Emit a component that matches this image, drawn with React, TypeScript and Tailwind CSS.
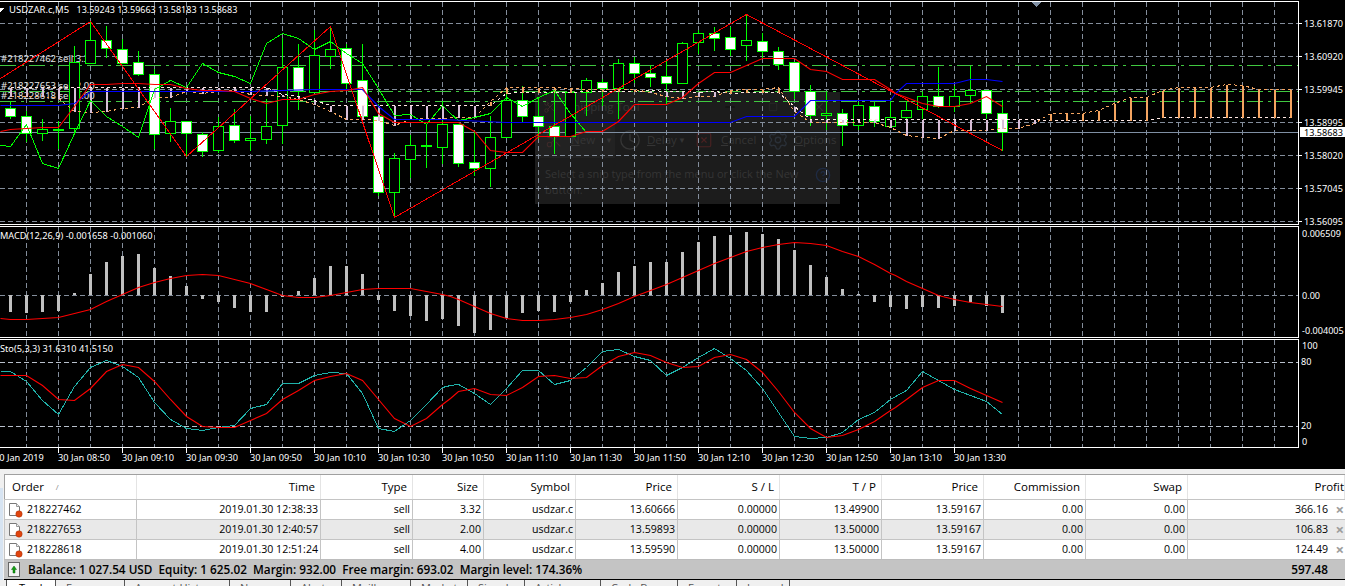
import { Scissors, Clock, SquareX, X, Settings, CircleHelp, Minus, Square } from "lucide-react";

type P = number[][];
const px = (v: number) => Math.floor(v / 3) + 0.5;
const off = (o: number, a: P): P => a.map(([x, y]) => [x + o, y]);
const pts = (a: P, base = 0) => a.map(([x, y]) => `${px(x)},${px(y) + base}`).join(" ");
const cx = (i: number) => 10.5 + 16 * i;

const candles: number[][] = [
  [300,355,325,349,1],[330,425,350,400,1],[355,422,388,400,0],[362,445,388,390,0],[135,400,187,385,0],[65,190,121,190,0],[75,172,121,145,1],[115,190,149,190,1],[152,225,187,223,1],[205,445,223,403,1],
  [322,425,364,400,0],[362,470,364,400,1],[395,470,403,454,1],[350,458,379,451,0],[325,428,376,421,1],[345,450,415,421,0],[295,430,379,418,0],[112,430,202,376,0],[130,328,202,274,1],[88,275,166,277,0],
  [78,205,148,169,0],[130,265,145,250,1],[130,355,241,349,1],[310,585,349,577,1],[457,650,475,577,0],[402,532,436,478,0],[370,503,436,439,0],[300,490,373,442,0],[370,500,373,490,1],[395,525,488,505,1],
  [345,560,412,505,0],[262,412,301,412,0],[255,365,301,349,1],[290,415,349,379,1],[265,460,379,409,1],[275,410,277,409,0],[232,345,241,277,0],[235,315,248,265,1],[175,355,190,265,0],[168,248,190,220,1],
  [193,260,220,232,1],[180,310,229,250,1],[123,250,130,250,0],[88,160,100,127,0],[78,152,100,115,1],[78,165,112,148,1],[42,182,121,136,0],[97,172,124,154,1],[138,208,154,193,1],[187,295,187,274,1],
  [252,375,275,346,1],[275,388,340,346,0],[325,435,340,376,1],[305,388,316,376,0],[305,380,319,364,1],[302,382,352,379,0],[302,380,331,352,0],[275,355,289,328,0],[200,322,289,319,1],[255,335,289,319,0],
  [196,308,271,286,0],[268,355,271,340,1],[297,450,340,397,1],
];

const cloud: [number, number, string][] = [
  [262,288,"p"],[262,290,"p"],[262,290,"p"],[262,295,"p"],[262,333,"p"],[262,337,"p"],[262,335,"p"],[262,325,"p"],[262,322,"p"],[262,293,"p"],[262,292,"p"],[262,275,"p"],[262,281,"p"],[262,275,"p"],[262,272,"p"],[262,284,"p"],[262,287,"p"],[282,290,"p"],[290,298,"p"],[302,312,"p"],
  [316,334,"p"],[316,358,"p"],[316,358,"p"],[316,362,"p"],[316,376,"p"],[316,358,"p"],[316,356,"p"],[316,355,"p"],[316,352,"p"],[316,352,"p"],[305,315,"o"],[262,280,"o"],[262,278,"o"],[262,278,"o"],[262,278,"o"],[264,278,"o"],[268,275,"o"],[268,275,"o"],[268,275,"o"],[268,275,"o"],
  [272,276,"p"],[275,290,"p"],[275,295,"p"],[277,290,"p"],[275,290,"p"],[272,280,"o"],[268,278,"o"],[268,278,"o"],[263,278,"o"],[320,335,"p"],[358,368,"p"],[358,368,"p"],[358,368,"p"],[358,368,"p"],[358,368,"p"],[358,382,"p"],[358,405,"p"],[358,413,"p"],[358,415,"p"],[358,392,"p"],
  [358,390,"p"],[358,390,"p"],[358,385,"p"],[358,385,"p"],[358,370,"p"],[340,362,"o"],[340,362,"o"],[340,362,"o"],[332,360,"o"],[310,362,"o"],[293,360,"o"],[292,360,"o"],[270,352,"o"],[262,352,"o"],[262,352,"o"],[262,352,"o"],[253,352,"o"],[256,352,"o"],[268,352,"o"],[268,352,"o"],[268,352,"o"],
];

const zig: P = [[0,235],[271,65],[559,470],[991,78],[1183,653],[2239,42],[3007,450]];
const ma: P = [
  [0,393],[31,388],[79,384],[127,382],[175,382],[223,320],[271,254],[319,252],[367,250],[415,250],[463,253],[511,253],[559,265],[607,272],[655,270],[703,275],[751,295],[799,310],[847,298],[895,298],[943,282],[991,275],[1039,270],[1087,262],[1135,340],[1183,367],[1231,367],[1279,368],[1327,367],
  ...off(1350,[[25,367],[73,395],[121,450],[169,458],[217,458],[265,409],[313,409],[361,409],[409,394],[457,394],[505,364],[553,313],[601,313],[649,313],[697,292],[745,250],[793,217],[841,217],[889,196],[937,175],[985,175],[1033,175],[1081,208],[1129,214],[1177,238],[1225,238],[1273,238],[1321,268]]),
  ...off(2685,[[0,280],[34,292],[82,310],[130,319],[178,319],[226,310],[274,289],[322,320]]),
];
const blue: P = [
  [0,316],[175,316],[223,310],[271,274],[319,274],[703,274],[751,274],[943,268],[1087,268],[1135,320],[1183,358],[1327,358],
  ...off(1350,[[169,367],[841,367],[889,349],[1033,349],[1081,301],[1321,301]]),
  ...off(2685,[[0,280],[34,250],[178,250],[226,238],[274,238],[322,244]]),
];
const greenLine: P = [
  [0,436],[31,439],[79,373],[127,490],[175,505],[223,400],[271,301],[319,349],[367,380],[415,411],[463,268],[511,241],[559,262],[607,190],[655,217],[703,229],[751,250],[799,130],[847,100],[895,115],[943,148],[991,124],[1039,160],[1087,190],[1135,265],[1183,345],[1231,342],[1279,373],[1327,316],
  ...off(1350,[[0,340],[25,362],[73,352],[121,340],[169,293],[217,318],[265,291],[313,272],[361,340],[409,397]]),
];

const macdBars = [262,265,262,258,205,148,112,94,88,130,154,184,222,232,250,262,262,216,198,160,124,123,148,226,258,274,288,283,303,325,316,280,264,258,262,232,195,174,141,123,112,111,82,51,34,30,22,27,43,75,121,156,192,208,232,247,252,247,250,243,232,243,264];
const macdSig: P = [
  [0,281],[31,284],[79,284],[127,281],[175,277],[223,265],[271,252],[319,230],[367,207],[415,187],[463,172],[511,160],[559,152],[607,149],[655,152],[703,163],[751,176],[799,193],[847,210],[895,216],[943,217],[991,210],[1039,203],[1087,193],[1135,190],[1183,190],[1231,190],[1279,198],[1327,208],
  ...off(1350,[[0,214],[25,222],[73,245],[121,265],[169,280],[217,286],[265,287],[313,283],[361,277],[409,267],[457,254],[505,235],[553,213],[601,197],[649,178],[697,156],[745,136],[793,116],[841,97],[889,78],[937,68],[985,58],[1033,52],[1081,55],[1129,61],[1177,79],[1225,95],[1273,118],[1321,145]]),
  ...off(2685,[[0,151],[34,170],[82,190],[130,210],[178,224],[226,232],[274,238],[322,244]]),
];
const stoMain: P = [
  [0,439],[31,439],[79,470],[127,525],[175,568],[223,484],[271,427],[319,406],[367,424],[415,457],[463,532],[511,583],[559,610],[607,616],[655,607],[703,600],[751,551],[799,538],[847,475],[895,475],[943,450],[991,442],[1039,445],[1087,505],[1135,610],[1183,619],[1231,586],[1279,538],[1327,486],
  ...off(1350,[[0,481],[25,478],[73,505],[121,538],[169,490],[217,436],[265,436],[313,478],[361,466],[409,427],[457,379],[505,373],[553,394],[601,406],[649,451],[697,427],[745,397],[793,370],[841,400],[889,436],[937,490],[985,562],[1033,634],[1081,640],[1129,637],[1177,622],[1225,584],[1273,562],[1321,523]]),
  ...off(2685,[[0,514],[34,495],[82,439],[130,466],[178,492],[226,511],[274,529],[322,567]]),
];
const stoSig: P = [
  [0,452],[31,451],[79,451],[127,481],[175,523],[223,526],[271,490],[319,439],[367,418],[415,427],[463,469],[511,523],[559,574],[607,604],[655,608],[703,606],[751,586],[799,565],[847,523],[895,496],[943,466],[991,454],[1039,445],[1087,466],[1135,523],[1183,580],[1231,604],[1279,580],[1327,538],
  ...off(1350,[[0,520],[25,499],[73,490],[121,508],[169,511],[217,487],[265,454],[313,451],[361,460],[409,457],[457,421],[505,393],[553,383],[601,390],[649,412],[697,427],[745,424],[793,397],[841,388],[889,403],[937,442],[985,499],[1033,562],[1081,610],[1129,636],[1177,632],[1225,613],[1273,589],[1321,556]]),
  ...off(2685,[[0,547],[34,523],[82,487],[130,466],[178,466],[226,490],[274,511],[322,533]]),
];

const vGrid = Array.from({ length: 40 }, (_, k) => 26.5 + 32 * k);
const GRID = "#838d9b";
const DOT = "5 3";

function VLines({ y1, y2 }: { y1: number; y2: number }) {
  return (
    <>
      {vGrid.map((x) => (
        <line key={x} x1={x} x2={x} y1={y1} y2={y2} stroke={GRID} strokeDasharray={DOT} />
      ))}
    </>
  );
}
function HLine({ y }: { y: number }) {
  return <line x1={0} x2={1298} y1={y} y2={y} stroke={GRID} strokeDasharray={DOT} />;
}

function MainPlot() {
  const orange = cloud.map((c, i) => `${cx(i)},${px(c[2] === "p" ? c[1] : c[0])}`).join(" ");
  const pale = cloud.map((c, i) => `${cx(i)},${px(c[2] === "p" ? c[0] : c[1])}`).join(" ");
  return (
    <svg width={1298} height={222} viewBox="0 2 1298 222" shapeRendering="crispEdges" className="block">
      <VLines y1={2} y2={224} />
      {[23.5, 56.5, 89.5, 122.5, 155.5, 188.5, 221.5].map((y) => <HLine key={y} y={y} />)}
      <text x={1} y={62} className="fill-[#e4e4e4] text-[9.5px]">#218227462 sell 3.32</text>
      <text x={1} y={89} className="fill-[#e4e4e4] text-[9.5px]">#218227653 sell 2.00</text>
      <text x={1} y={99} className="fill-[#e4e4e4] text-[9.5px]">#218228618 sell 4.00</text>
      {[65.5, 91.5, 101.5].map((y) => (
        <line key={y} x1={0} x2={1298} y1={y} y2={y} stroke="#40c840" strokeDasharray="16 5 3 5" />
      ))}
      <line x1={0} x2={1298} y1={132.5} y2={132.5} stroke="#7f8fa3" />
      {candles.map((c, i) => {
        const x = cx(i);
        const top = px(c[2]);
        const h = Math.max(px(c[3]) - top, 1);
        const inPanel = x > 535 && x < 840 && top > 93;
        return (
          <g key={i}>
            <line x1={x} x2={x} y1={px(c[0])} y2={px(c[1])} stroke="#00ff00" />
            <rect x={x - 5} y={top} width={10} height={h} fill={c[4] ? "#ffffff" : inPanel ? "#1b1b1b" : "#000000"} stroke="#00ff00" />
          </g>
        );
      })}
      <polyline points={pale} fill="none" stroke="#ffe8e4" strokeDasharray="3 3" />
      <polyline points={orange} fill="none" stroke="#f4a460" strokeDasharray="3 3" />
      {cloud.map((c, i) => (
        <rect key={i} x={cx(i) - 1} y={px(c[0])} width={2} height={px(c[1]) - px(c[0])} fill={c[2] === "p" ? "#d8bfd8" : "#f4a460"} />
      ))}
      <polyline points={pts(greenLine)} fill="none" stroke="#00ff00" />
      <polyline points={pts(blue)} fill="none" stroke="#0000ff" strokeWidth={1.1} shapeRendering="auto" />
      <polyline points={pts(zig)} fill="none" stroke="#ff0000" />
      <polyline points={pts(ma)} fill="none" stroke="#ff0000" strokeWidth={1.1} shapeRendering="auto" />
      <polygon points="1031,2 1041,2 1036,7" fill="#7f8fa3" />
      <polygon points="0,8 4,8 0,12" fill="#ffffff" />
      <text x={9} y={13} className="fill-white text-[9.5px]">USDZAR.c,M5</text>
      <text x={76.5} y={13} className="fill-white text-[9px]">13.59243 13.59663 13.58183 13.58683</text>
    </svg>
  );
}

function MainAxis() {
  const rows: [string, number][] = [["13.61870", 23], ["13.60920", 56], ["13.59945", 89], ["13.58995", 122], ["13.58020", 155], ["13.57045", 188], ["13.56095", 221]];
  return (
    <svg width={46} height={224} viewBox="1299 1 46 224" shapeRendering="crispEdges" className="block">
      {rows.map(([t, y]) => (
        <g key={t}>
          <line x1={1299} x2={1302} y1={y + 0.5} y2={y + 0.5} stroke="#fff" />
          <text x={1304} y={y + 3.5} className="fill-white text-[9.1px]">{t}</text>
        </g>
      ))}
      <rect x={1300} y={127} width={45} height={10} fill="#fff" />
      <text x={1304} y={135.5} className="fill-black text-[9.1px]">13.58683</text>
    </svg>
  );
}

function MacdPlot() {
  return (
    <svg width={1298} height={110} viewBox="0 227 1298 110" shapeRendering="crispEdges" className="block">
      <VLines y1={227} y2={337} />
      <line x1={0} x2={1298} y1={295.5} y2={295.5} stroke={GRID} strokeDasharray={DOT} />
      {macdBars.map((v, i) => {
        const y = 225 + v / 3;
        const a = Math.min(y, 295);
        const b = Math.max(y, 295);
        return <rect key={i} x={cx(i) - 1.5} y={a} width={3} height={b - a} fill="#c0c0c0" />;
      })}
      <polyline points={pts(macdSig, 225)} fill="none" stroke="#ff0000" strokeWidth={1.1} shapeRendering="auto" />
      <text x={0} y={239} className="fill-white text-[9.2px]">MACD(12,26,9) -0.001658 -0.001060</text>
    </svg>
  );
}
function MacdAxis() {
  return (
    <svg width={46} height={112} viewBox="1299 226 46 112" shapeRendering="crispEdges" className="block">
      <text x={1302} y={237} className="fill-white text-[9.1px]">0.006509</text>
      <text x={1302} y={299} className="fill-white text-[9.1px]">0.00</text>
      <text x={1302} y={334} className="fill-white text-[9.1px]">-0.004005</text>
    </svg>
  );
}
function StoPlot() {
  return (
    <svg width={1298} height={107} viewBox="0 340 1298 107" shapeRendering="crispEdges" className="block">
      <VLines y1={340} y2={447} />
      <line x1={0} x2={1298} y1={362.5} y2={362.5} stroke="#b8c0cc" strokeDasharray={DOT} />
      <line x1={0} x2={1298} y1={426.5} y2={426.5} stroke="#b8c0cc" strokeDasharray={DOT} />
      <polyline points={pts(stoMain, 225)} fill="none" stroke="#20b2aa" />
      <polyline points={pts(stoSig, 225)} fill="none" stroke="#ff0000" strokeWidth={1.1} shapeRendering="auto" />
      <text x={0} y={352} className="fill-white text-[9.2px]">Sto(5,3,3) 31.6310 41.5150</text>
    </svg>
  );
}
function StoAxis() {
  return (
    <svg width={46} height={109} viewBox="1299 339 46 109" shapeRendering="crispEdges" className="block">
      <text x={1302} y={349} className="fill-white text-[9.1px]">100</text>
      <text x={1301} y={365} className="fill-white text-[9.1px]">80</text>
      <text x={1301} y={429} className="fill-white text-[9.1px]">20</text>
      <text x={1302} y={445} className="fill-white text-[9.1px]">0</text>
    </svg>
  );
}
function TimeAxis() {
  const labels = ["2019", "08:50", "09:10", "09:30", "09:50", "10:10", "10:30", "10:50", "11:10", "11:30", "11:50", "12:10", "12:30", "12:50", "13:10", "13:30"];
  return (
    <svg width={1345} height={21} viewBox="0 448 1345 21" shapeRendering="crispEdges" className="block">
      {labels.map((l, k) => (
        <g key={l}>
          <line x1={-5.5 + 64 * k} x2={-5.5 + 64 * k} y1={448} y2={453} stroke="#fff" />
          <text x={-6 + 64 * k} y={461} className="fill-white text-[9.2px]">{`30 Jan ${l}`}</text>
        </g>
      ))}
    </svg>
  );
}

function SnipGhost() {
  return (
    <div className="absolute left-[535px] top-[92px] z-0 flex h-[112px] w-[305px] flex-col bg-[#1c1c1c] font-['Open_Sans',sans-serif] text-[11.5px] text-[#353535]">
      <div className="flex h-[30px] items-center pl-[8px]">
        <Scissors size={14} strokeWidth={1.5} className="shrink-0 text-[#3d2a2a]" />
        <span className="ml-[10px] w-[72px] shrink-0 whitespace-nowrap">Snipping Tool</span>
        <Minus size={14} className="ml-[84px] shrink-0 text-[#0c0c0c]" />
        <Square size={10} className="ml-[31px] shrink-0 text-[#2a2a2a]" />
        <X size={14} className="ml-[34px] shrink-0 text-[#2f2f2f]" />
      </div>
      <div className="flex h-[36px] items-center">
        <div className="flex h-full w-[80px] shrink-0 items-center bg-[#222] pl-[10px]">
          <Scissors size={18} strokeWidth={1.5} className="shrink-0 text-[#3d2a2a]" />
          <span className="ml-[8px] w-[24px] shrink-0"><u>N</u>ew</span>
          <span className="ml-[10px] text-[8px]">▼</span>
        </div>
        <Clock size={22} strokeWidth={1.5} className="ml-[4px] shrink-0" />
        <span className="ml-[6px] w-[31px] shrink-0"><u>D</u>elay</span>
        <span className="text-[8px]">▼</span>
        <SquareX size={18} strokeWidth={1.5} className="ml-[9px] shrink-0 text-[#4a2222]" />
        <span className="ml-[8px] w-[38px] shrink-0"><u>C</u>ancel</span>
        <Settings size={22} strokeWidth={1.5} className="ml-[8px] shrink-0 text-[#2a3038]" />
        <span className="ml-[5px] shrink-0"><u>O</u>ptions</span>
      </div>
      <div className="relative flex-1 px-[10px] pt-[8px] text-[11px] leading-[16px]">
        <p className="w-[262px]">Select a snip type from the menu or click the New button.</p>
        <CircleHelp size={16} className="absolute right-[9px] top-[9px] text-[#1e2a42]" />
      </div>
    </div>
  );
}

const headers = ["Order", "Time", "Type", "Size", "Symbol", "Price", "S / L", "T / P", "Price", "Commission", "Swap", "Profit"];
const rows = [
  ["218227462", "2019.01.30 12:38:33", "sell", "3.32", "usdzar.c", "13.60666", "0.00000", "13.49900", "13.59167", "0.00", "0.00", "366.16"],
  ["218227653", "2019.01.30 12:40:57", "sell", "2.00", "usdzar.c", "13.59893", "0.00000", "13.50000", "13.59167", "0.00", "0.00", "106.83"],
  ["218228618", "2019.01.30 12:51:24", "sell", "4.00", "usdzar.c", "13.59590", "0.00000", "13.50000", "13.59167", "0.00", "0.00", "124.49"],
];
const cols = "grid grid-cols-[132px_184px_92px_71px_92px_102px_102px_102px_102px_102px_102px_157px]";

function OrderIcon() {
  return (
    <svg width={16} height={16} viewBox="0 0 16 16" className="shrink-0">
      <path d="M1.5 1.5H8.5L11.5 4.5V13.5H1.5Z" fill="#fff" stroke="#777" />
      <path d="M8.5 1.5V4.5H11.5" fill="#eee" stroke="#999" />
      <circle cx={11} cy={12} r={3.2} fill="#e0440e" stroke="#a83208" strokeWidth={0.5} />
    </svg>
  );
}

function Terminal() {
  const tabs: [string, number][] = [["Exposure", 69], ["Account History", 105], ["News", 61], ["Alerts", 51], ["Mailbox", 69], ["Market", 57], ["Signals", 57], ["Articles", 76], ["Code Base", 77], ["Experts", 59], ["Journal", 53]];
  return (
    <div className="flex min-h-0 flex-1 flex-col bg-[#f0f0f0] font-['Open_Sans',sans-serif] text-[10.6px] text-black">
      <div className="h-[5px] shrink-0" />
      <div className="flex min-h-0 flex-1">
        <div className="w-[4px] shrink-0 pt-[14px]"><div className="h-full w-[3px] bg-[#d7e4f2]" /></div>
        <div className="min-w-0 flex-1 overflow-hidden">
          <div className={`${cols} h-[25px] border-l border-t border-[#a0a0a0] bg-white`}>
            {headers.map((h, i) => (
              <div key={i} className={`flex items-center border-r border-[#e4e4e4] pb-px text-[11.5px] ${i === 0 ? "pl-[7px]" : i === 11 ? "justify-end" : "justify-end pr-[5px]"}`}>
                {h}
                {i === 0 && <span className="ml-[12px] text-[8px] text-[#888]">/</span>}
              </div>
            ))}
          </div>
          {rows.map((r, ri) => (
            <div key={ri} className={`${cols} h-[20px] border-l border-t border-[#c4c4c4] ${ri === 1 ? "bg-[#e9e9e9]" : "bg-white"}`}>
              {r.map((c, i) => (
                <div key={i} className={`flex items-center ${i === 11 ? "justify-end pr-[17px] relative" : "border-r border-[#c4c4c4]"} ${i === 0 ? "pl-[3px]" : i < 11 ? "justify-end pr-[2px]" : ""}`}>
                  {i === 0 && <OrderIcon />}
                  {i === 0 ? <span className="ml-[3px]">{c}</span> : c}
                  {i === 11 && <span className="absolute right-[1px] text-[15px] leading-none font-bold text-[#9c9c9c]">×</span>}
                </div>
              ))}
            </div>
          ))}
          <div className="flex h-[20px] items-center justify-between border-t border-[#bcbcbc] bg-[#c4c4c4] pl-[4px] pr-[17px] text-[11.75px] font-semibold">
            <div className="flex items-center gap-[8px] whitespace-pre">
              <svg width={12} height={15} viewBox="0 0 12 15" className="shrink-0">
                <rect x={0.5} y={0.5} width={11} height={14} fill="#f2f2f2" stroke="#666" />
                <path d="M6 4 8.5 7.5H7V11H5V7.5H3.5Z" fill="#12a012" stroke="#0a600a" strokeWidth={0.5} />
              </svg>
              <span>Balance: 1 027.54 USD  Equity: 1 625.02  Margin: 932.00  Free margin: 693.02  Margin level: 174.36%</span>
            </div>
            <span>597.48</span>
          </div>
          <div className="border-t border-black" />
        </div>
      </div>
      <div className="flex h-[6px] shrink-0 overflow-hidden pl-[6px] text-[11px] leading-[16px]">
        <div className="h-[16px] w-[50px] shrink-0 border-x border-[#555] bg-white pl-[12px]">Trade</div>
        {tabs.map(([t, w]) => (
          <div key={t} style={{ width: w }} className="h-[16px] shrink-0 border-r border-[#555] pl-[10px] text-[#555]">{t}</div>
        ))}
      </div>
    </div>
  );
}

export default function App() {
  return (
    <div className="flex h-[586px] w-[1345px] flex-col overflow-hidden font-['Noto_Sans',sans-serif]">
      <div className="relative flex h-[469px] shrink-0 flex-col bg-black pt-px">
        <SnipGhost />
        <div className="relative z-10 flex">
          <div className="border-y border-r border-white"><MainPlot /></div>
          <MainAxis />
        </div>
        <div className="relative z-10 mt-px flex">
          <div className="border-y border-r border-white"><MacdPlot /></div>
          <MacdAxis />
        </div>
        <div className="relative z-10 mt-px flex">
          <div className="border-y border-r border-white"><StoPlot /></div>
          <StoAxis />
        </div>
        <TimeAxis />
      </div>
      <Terminal />
    </div>
  );
}
